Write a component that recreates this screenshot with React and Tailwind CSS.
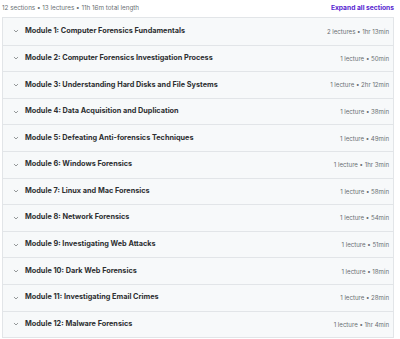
const sections = [
  ["Module 1: Computer Forensics Fundamentals", "2 lectures • 1hr 13min"],
  ["Module 2: Computer Forensics Investigation Process", "1 lecture • 50min"],
  ["Module 3: Understanding Hard Disks and File Systems", "1 lecture • 2hr 12min"],
  ["Module 4: Data Acquisition and Duplication", "1 lecture • 38min"],
  ["Module 5: Defeating Anti-forensics Techniques", "1 lecture • 49min"],
  ["Module 6: Windows Forensics", "1 lecture • 1hr 3min"],
  ["Module 7: Linux and Mac Forensics", "1 lecture • 58min"],
  ["Module 8: Network Forensics", "1 lecture • 54min"],
  ["Module 9: Investigating Web Attacks", "1 lecture • 51min"],
  ["Module 10: Dark Web Forensics", "1 lecture • 18min"],
  ["Module 11: Investigating Email Crimes", "1 lecture • 28min"],
  ["Module 12: Malware Forensics", "1 lecture • 1hr 4min"],
];

const Chevron = () => (
  <svg className="w-[6px] h-[6px] text-[#5a5e61]" viewBox="0 0 24 24" fill="none" stroke="currentColor">
    <path strokeLinecap="round" strokeLinejoin="round" strokeWidth={2.5} d="M5 9l7 7 7-7" />
  </svg>
);

export default function App() {
  return (
    <div className="w-[400px] h-[339px] bg-white font-['Inter',sans-serif] overflow-hidden">
      <div className="pl-[2px] pr-[6px]">
        <div className="h-[17px] flex items-center justify-between">
          <span className="text-[6.3px] text-[#6a6f73]">12 sections • 13 lectures • 11h 16m total length</span>
          <span className="text-[6.7px] font-bold text-[#5624d0]">Expand all sections</span>
        </div>
        <div className="border border-[#e2e5e8]">
          {sections.map(([title, meta], i) => (
            <div
              key={i}
              className={`h-[26.6px] bg-[#f7f9fa] flex items-center pl-[10px] pr-[4px] ${i > 0 ? "border-t border-[#e2e5e8]" : ""}`}
            >
              <Chevron />
              <span className="ml-[6px] text-[7.3px] font-bold text-[#2d2f31] flex-1">{title}</span>
              <span className="text-[6.1px] text-[#6a6f73]">{meta}</span>
            </div>
          ))}
        </div>
      </div>
    </div>
  );
}
